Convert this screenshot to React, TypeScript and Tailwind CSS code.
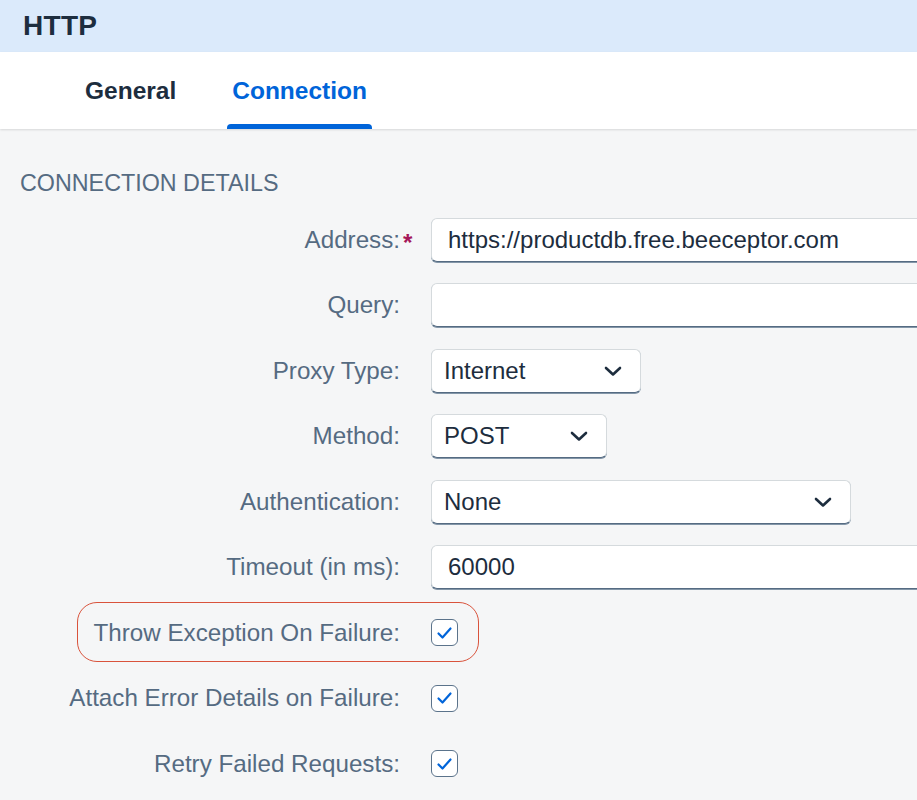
import { ReactNode } from 'react';

const font = { fontFamily: '"Liberation Sans", Arial, sans-serif' };

function Chevron() {
    return (
        <svg width="18" height="12" viewBox="0 0 18 12" fill="none">
            <path d="M2 3l7 6.5L16 3" stroke="#1d2d3e" strokeWidth="2.6" strokeLinecap="round" strokeLinejoin="round" />
        </svg>
    );
}

function CheckBox() {
    return (
        <div className="w-[27px] h-[27px] rounded-[6px] border-[1.5px] border-[#5b738b] bg-white flex items-center justify-center">
            <svg width="17" height="14" viewBox="0 0 17 14" fill="none">
                <path d="M2.5 7.5l4 4L14.5 2.5" stroke="#0064d9" strokeWidth="2.2" strokeLinecap="round" strokeLinejoin="round" />
            </svg>
        </div>
    );
}

function Field({ children, width }: { children?: ReactNode; width: string }) {
    return (
        <div className={`${width} h-[44px] shrink-0 bg-white rounded-[6px] border border-[#d5dadd] border-b-[#556b82] shadow-[0_1px_0_#8396a8] flex items-center pl-[16px] pr-[18px] text-[24px] text-[#1d2d3e]`}>
            {children}
        </div>
    );
}

function Select({ value, width }: { value: string; width: string }) {
    return (
        <div className={`${width} h-[44px] shrink-0 bg-white rounded-[6px] border border-[#d5dadd] border-b-[#556b82] shadow-[0_1px_0_#8396a8] flex items-center justify-between pl-[12px] pr-[18px] text-[24px] text-[#1d2d3e]`}>
            <span>{value}</span>
            <Chevron />
        </div>
    );
}

function Row({ label, required, children }: { label: string; required?: boolean; children: ReactNode }) {
    return (
        <div className="h-[65.5px] flex items-center">
            <div className="w-[401px] shrink-0 text-right text-[24.2px] text-[#556b82] pr-[1px]">
                <span className="relative">
                    {label}
                    {required && <span className="absolute left-full ml-[3px] top-[-1px] font-bold text-[#a5175a]">*</span>}
                </span>
            </div>
            <div className="flex ml-[30px]">{children}</div>
        </div>
    );
}

export default function App() {
    return (
        <div className="w-[917px] h-[800px] overflow-hidden bg-[#f5f6f7]" style={font}>
            <div className="h-[52px] bg-[#dbeafb] flex items-center px-[23px]">
                <span className="text-[28px] font-bold text-[#1d2d3e] tracking-[0.3px]">HTTP</span>
            </div>
            <div className="h-[77px] bg-white flex items-end pl-[79px] gap-[45px] shadow-[0_1px_2px_rgba(0,0,0,0.12)] relative">
                <div className="h-full flex flex-col justify-end">
                    <div className="px-[6px] pb-[14px] text-[24.5px] font-bold text-[#1d2d3e]">General</div>
                    <div className="h-[5px]" />
                </div>
                <div className="h-full flex flex-col justify-end">
                    <div className="px-[5px] pb-[14px] text-[24.5px] font-bold text-[#0064d9]">Connection</div>
                    <div className="h-[5px] bg-[#0064d9] rounded-t-[4px]" />
                </div>
            </div>
            <div className="pt-[40px] pl-[20px] text-[23.3px] text-[#556b82] leading-[28px]">CONNECTION DETAILS</div>
            <div className="mt-[10px]">
                <Row label="Address:" required>
                    <Field width="w-[520px]">https://productdb.free.beeceptor.com</Field>
                </Row>
                <Row label="Query:">
                    <Field width="w-[520px]" />
                </Row>
                <Row label="Proxy Type:">
                    <Select value="Internet" width="w-[210px]" />
                </Row>
                <Row label="Method:">
                    <Select value="POST" width="w-[176px]" />
                </Row>
                <Row label="Authentication:">
                    <Select value="None" width="w-[420px]" />
                </Row>
                <Row label="Timeout (in ms):">
                    <Field width="w-[520px]">60000</Field>
                </Row>
                <div className="relative">
                    <div className="absolute left-[77px] top-[2px] w-[402px] h-[60px] rounded-[20px] border-[1.5px] border-[#d9533c]" />
                    <Row label="Throw Exception On Failure:">
                        <CheckBox />
                    </Row>
                </div>
                <Row label="Attach Error Details on Failure:">
                    <CheckBox />
                </Row>
                <Row label="Retry Failed Requests:">
                    <CheckBox />
                </Row>
            </div>
        </div>
    );
}
